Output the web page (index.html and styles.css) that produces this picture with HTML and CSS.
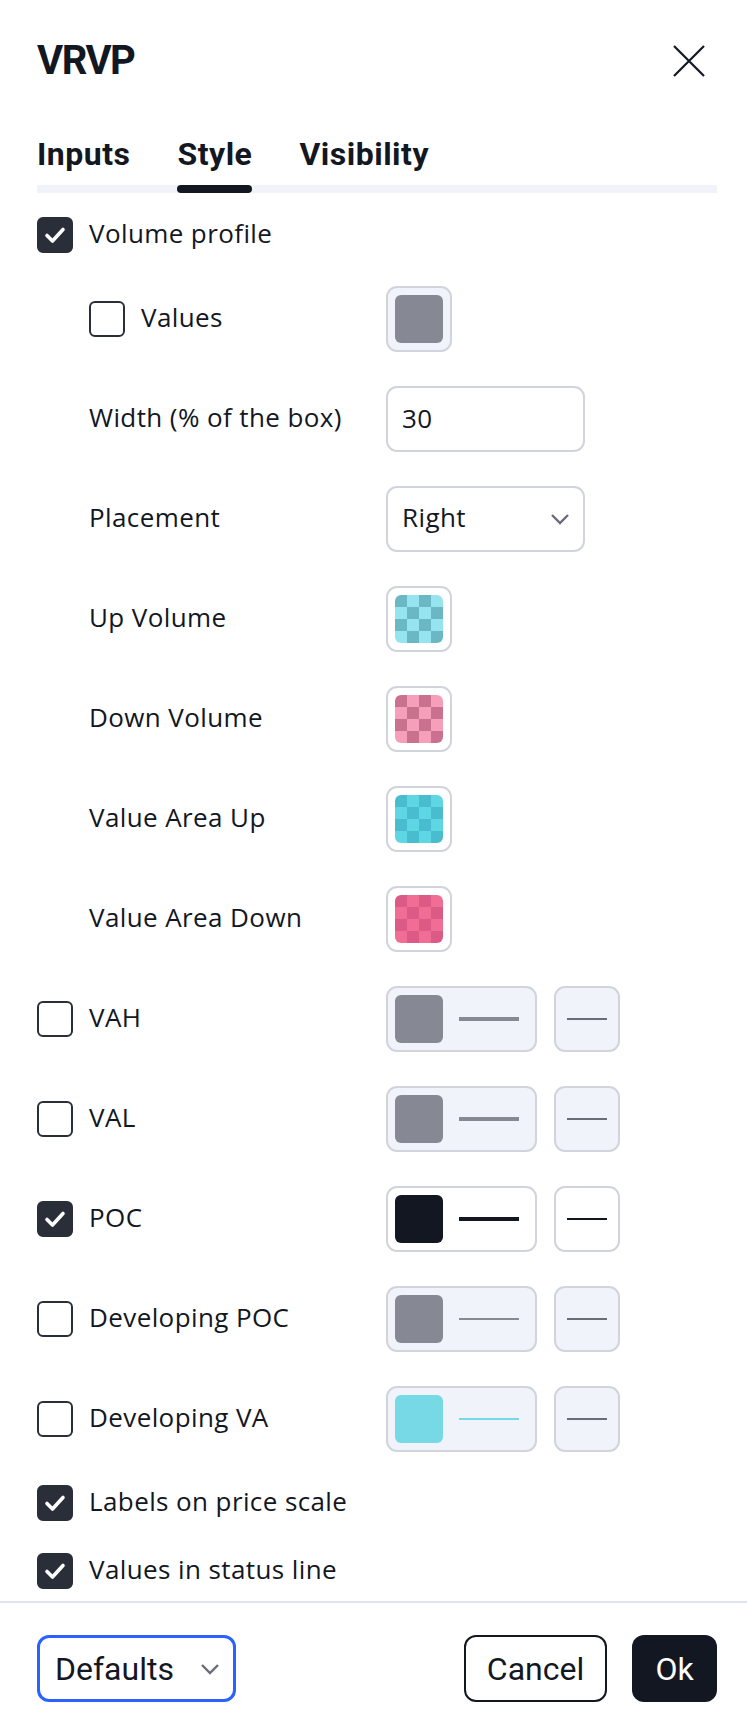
FILE: index.html
```html
<!DOCTYPE html>
<html lang="en">
<head>
    <meta charset="UTF-8">
    <meta name="viewport" content="width=device-width, initial-scale=1.0">
    <title>VRVP Settings</title>
    <link rel="stylesheet" href="styles.css">
</head>
<body>
    <div class="dialog">
        <div class="header">
            <h1>VRVP</h1>
            <button class="close-button" aria-label="Close">
                <svg width="32" height="32" viewBox="0 0 32 32"><path d="M1 1L31 31M31 1L1 31" stroke="#131722" stroke-width="2.2" fill="none"/></svg>
            </button>
        </div>

        <div class="tabs">
            <div class="tab"><span>Inputs</span><i class="tab-indicator"></i></div>
            <div class="tab active"><span>Style</span><i class="tab-indicator"></i></div>
            <div class="tab"><span>Visibility</span><i class="tab-indicator"></i></div>
        </div>

        <div class="content">
            <div class="row check-row">
                <label class="check"><span class="checkbox checked"></span><span class="text">Volume profile</span></label>
            </div>

            <div class="row field-row">
                <label class="check indent"><span class="checkbox"></span><span class="text">Values</span></label>
                <div class="controls">
                    <div class="swatch-button disabled"><span class="swatch" style="background:#868993"></span></div>
                </div>
            </div>

            <div class="row field-row">
                <span class="label indent">Width (% of the box)</span>
                <div class="controls"><input class="text-input" type="text" value="30"></div>
            </div>

            <div class="row field-row">
                <span class="label indent">Placement</span>
                <div class="controls">
                    <div class="select">
                        <span class="text">Right</span>
                        <svg width="20" height="12" viewBox="0 0 20 12"><path d="M2 2L10 10L18 2" stroke="#6a6d78" stroke-width="2.4" fill="none"/></svg>
                    </div>
                </div>
            </div>

            <div class="row field-row">
                <span class="label indent">Up Volume</span>
                <div class="controls">
                    <div class="swatch-button"><span class="swatch checker up-volume"></span></div>
                </div>
            </div>

            <div class="row field-row">
                <span class="label indent">Down Volume</span>
                <div class="controls">
                    <div class="swatch-button"><span class="swatch checker down-volume"></span></div>
                </div>
            </div>

            <div class="row field-row">
                <span class="label indent">Value Area Up</span>
                <div class="controls">
                    <div class="swatch-button"><span class="swatch checker va-up"></span></div>
                </div>
            </div>

            <div class="row field-row">
                <span class="label indent">Value Area Down</span>
                <div class="controls">
                    <div class="swatch-button"><span class="swatch checker va-down"></span></div>
                </div>
            </div>

            <div class="row field-row">
                <label class="check"><span class="checkbox"></span><span class="text">VAH</span></label>
                <div class="controls">
                    <div class="line-button disabled"><span class="swatch" style="background:#868993"></span><span class="line thick" style="background:#868993"></span></div>
                    <div class="style-button disabled"><span class="style-line"></span></div>
                </div>
            </div>

            <div class="row field-row">
                <label class="check"><span class="checkbox"></span><span class="text">VAL</span></label>
                <div class="controls">
                    <div class="line-button disabled"><span class="swatch" style="background:#868993"></span><span class="line thick" style="background:#868993"></span></div>
                    <div class="style-button disabled"><span class="style-line"></span></div>
                </div>
            </div>

            <div class="row field-row">
                <label class="check"><span class="checkbox checked"></span><span class="text">POC</span></label>
                <div class="controls">
                    <div class="line-button"><span class="swatch" style="background:#131722"></span><span class="line thick" style="background:#131722"></span></div>
                    <div class="style-button"><span class="style-line dark"></span></div>
                </div>
            </div>

            <div class="row field-row">
                <label class="check"><span class="checkbox"></span><span class="text">Developing POC</span></label>
                <div class="controls">
                    <div class="line-button disabled"><span class="swatch" style="background:#868993"></span><span class="line" style="background:#868993"></span></div>
                    <div class="style-button disabled"><span class="style-line"></span></div>
                </div>
            </div>

            <div class="row field-row">
                <label class="check"><span class="checkbox"></span><span class="text">Developing VA</span></label>
                <div class="controls">
                    <div class="line-button disabled"><span class="swatch" style="background:#77d8e6"></span><span class="line" style="background:#77d8e6"></span></div>
                    <div class="style-button disabled"><span class="style-line"></span></div>
                </div>
            </div>

            <div class="row check-row">
                <label class="check"><span class="checkbox checked"></span><span class="text">Labels on price scale</span></label>
            </div>

            <div class="row check-row">
                <label class="check"><span class="checkbox checked"></span><span class="text">Values in status line</span></label>
            </div>
        </div>

        <div class="footer">
            <div class="defaults-select">
                <span>Defaults</span>
                <svg width="20" height="12" viewBox="0 0 20 12"><path d="M2 2L10 10L18 2" stroke="#6a6d78" stroke-width="2.4" fill="none"/></svg>
            </div>
            <div class="footer-buttons">
                <button class="btn btn-secondary">Cancel</button>
                <button class="btn btn-primary">Ok</button>
            </div>
        </div>
    </div>
</body>
</html>
```

FILE: styles.css
```css
:root {
    --text-color: #131722;
    --checkbox-color: #2a2e39;
    --border-color: #d1d4dc;
    --disabled-bg: #f0f3fa;
    --accent-color: #2962ff;
    --body-font: 'Open Sans', Roboto, sans-serif;
}

* {
    box-sizing: border-box;
}

body {
    margin: 0;
    background: #ffffff;
    color: var(--text-color);
    font-family: Roboto, 'Liberation Sans', sans-serif;
    font-size: 26px;
}

.dialog {
    height: 1727px;
    padding: 0 30px 0 37px;
    display: flex;
    flex-direction: column;
}

.header {
    display: flex;
    align-items: center;
    justify-content: space-between;
    padding-top: 37px;
    height: 85px;
}

.header h1 {
    margin: 0;
    font-size: 40px;
    font-weight: 700;
    line-height: 48px;
    letter-spacing: -1.5px;
}

.close-button {
    background: none;
    border: none;
    padding: 0;
    margin-right: 12px;
    display: flex;
    cursor: pointer;
}

.tabs {
    display: flex;
    gap: 47px;
    margin-top: 49px;
    background: linear-gradient(var(--disabled-bg), var(--disabled-bg)) left bottom / 100% 8px no-repeat;
}

.tab {
    display: flex;
    flex-direction: column;
    gap: 11px;
    font-size: 32px;
    font-weight: 700;
    line-height: 40px;
    letter-spacing: 0.5px;
}

.tab-indicator {
    display: block;
    height: 8px;
    border-radius: 4px;
}

.tab.active .tab-indicator {
    background: var(--text-color);
}

.content {
    margin-top: 8px;
    height: 1400px;
    overflow: hidden;
    flex-shrink: 0;
    font-family: var(--body-font);
    letter-spacing: 0.4px;
}

.row {
    display: grid;
    grid-template-columns: 349px auto;
    align-items: center;
}

.check-row {
    height: 68px;
}

.field-row {
    height: 100px;
}

.check {
    display: flex;
    align-items: center;
    gap: 16px;
    line-height: 36px;
    white-space: nowrap;
}

.label {
    line-height: 36px;
    white-space: nowrap;
    margin-bottom: 4px;
}

.text {
    margin-bottom: 4px;
}

.indent {
    padding-left: 52px;
}

.checkbox {
    width: 36px;
    height: 36px;
    border: 2px solid var(--checkbox-color);
    border-radius: 6px;
    flex-shrink: 0;
}

.checkbox.checked {
    background: var(--checkbox-color) url("data:image/svg+xml,%3Csvg xmlns='http://www.w3.org/2000/svg' width='32' height='32' viewBox='0 0 32 32'%3E%3Cpath d='M8 16.5L13.5 22L24 10.5' stroke='white' stroke-width='3.6' stroke-linecap='round' stroke-linejoin='round' fill='none'/%3E%3C/svg%3E") center / 32px 32px no-repeat;
}

.controls {
    display: flex;
    gap: 17px;
}

.swatch-button,
.style-button {
    width: 66px;
    height: 66px;
    border: 2px solid var(--border-color);
    border-radius: 11px;
    background: #ffffff;
    display: flex;
    align-items: center;
    justify-content: center;
}

.line-button {
    width: 151px;
    height: 66px;
    border: 2px solid var(--border-color);
    border-radius: 11px;
    background: #ffffff;
    display: flex;
    align-items: center;
    gap: 16px;
    padding-left: 7px;
}

.disabled {
    background: var(--disabled-bg);
}

.swatch {
    width: 48px;
    height: 48px;
    border-radius: 6px;
    flex-shrink: 0;
}

.checker {
    background-size: 24px 24px;
}

.up-volume {
    background-image: repeating-conic-gradient(#96e4ef 0 25%, #6bb7c4 0 50%);
}

.down-volume {
    background-image: repeating-conic-gradient(#f59fbb 0 25%, #c9718f 0 50%);
}

.va-up {
    background-image: repeating-conic-gradient(#5ed6e4 0 25%, #49bdcf 0 50%);
}

.va-down {
    background-image: repeating-conic-gradient(#f06e96 0 25%, #dc5b86 0 50%);
}

.line {
    width: 60px;
    height: 2px;
}

.line.thick {
    height: 4px;
}

.style-line {
    width: 40px;
    height: 2px;
    background: #6a6d78;
}

.style-line.dark {
    background: var(--text-color);
}

.text-input,
.select {
    width: 199px;
    height: 66px;
    border: 2px solid var(--border-color);
    border-radius: 11px;
    background: #ffffff;
    font-family: inherit;
    font-size: 26px;
    letter-spacing: inherit;
    color: var(--text-color);
    padding: 0 14px 3px;
}

.select {
    display: flex;
    align-items: center;
    justify-content: space-between;
    padding: 0 13px 0 14px;
}

.footer {
    border-top: 2px solid #e0e3eb;
    margin: 0 -30px 0 -37px;
    padding: 32px 30px 0 37px;
    display: flex;
    justify-content: space-between;
}

.defaults-select {
    width: 199px;
    height: 67px;
    border: 3px solid var(--accent-color);
    border-radius: 12px;
    display: flex;
    align-items: center;
    justify-content: space-between;
    padding: 0 13px 0 15px;
    font-size: 32px;
}

.footer-buttons {
    display: flex;
    gap: 25px;
}

.btn {
    height: 67px;
    border-radius: 12px;
    font-family: inherit;
    font-size: 32px;
    padding: 0;
    cursor: pointer;
}

.btn-secondary {
    width: 143px;
    background: #ffffff;
    border: 2px solid var(--text-color);
    color: var(--text-color);
}

.btn-primary {
    width: 85px;
    background: var(--text-color);
    border: none;
    color: #ffffff;
}
```
